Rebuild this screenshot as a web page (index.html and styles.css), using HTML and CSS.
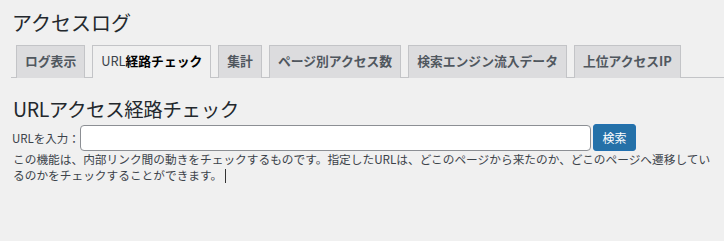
FILE: index.html
```html
<!DOCTYPE html>
<html lang="ja">
<head>
<meta charset="utf-8">
<title>アクセスログ</title>
<link rel="stylesheet" href="styles.css">
</head>
<body>
<div class="wrap">
  <h1 class="page-title">アクセスログ</h1>
  <nav class="nav-tabs">
    <a class="nav-tab">ログ表示</a>
    <a class="nav-tab active">URL<b>経路チェック</b></a>
    <a class="nav-tab">集計</a>
    <a class="nav-tab">ページ別アクセス数</a>
    <a class="nav-tab">検索エンジン流入データ</a>
    <a class="nav-tab">上位アクセスIP</a>
  </nav>
  <h2 class="section-title">URLアクセス経路チェック</h2>
  <form class="search-row">
    <label class="search-label" for="url">URLを入力：</label>
    <input class="search-input" id="url" type="text">
    <button class="search-btn" type="button">検索</button>
  </form>
  <p class="desc">この機能は、内部リンク間の動きをチェックするものです。指定したURLは、どこのページから来たのか、どこのページへ遷移しているのかをチェックすることができます。<span class="caret"></span></p>
</div>
</body>
</html>
```
FILE: styles.css
```css
html, body {
  margin: 0;
  padding: 0;
  background: #f0f0f0;
}
body {
  font-family: "Noto Sans CJK JP", "Noto Sans", sans-serif;
  color: #1d2327;
  width: 724px;
  height: 241px;
  overflow: hidden;
}
.wrap {
  padding: 0 8px 0 11px;
}
.page-title {
  margin: 0;
  padding-top: 9px;
  padding-left: 1px;
  font-size: 20px;
  font-weight: 400;
  line-height: 28px;
  color: #23282d;
}
.nav-tabs {
  display: flex;
  gap: 7px;
  margin-top: 8px;
  padding-left: 5px;
  border-bottom: 1px solid #c3c4c7;
  margin-right: -8px;
  height: 32px;
}
.nav-tab {
  box-sizing: border-box;
  height: 33px;
  padding: 0 8px;
  border: 1px solid #c3c4c7;
  border-bottom: none;
  background: #dcdcde;
  color: #50575e;
  font-size: 12.8px;
  font-weight: 700;
  line-height: 30px;
  white-space: nowrap;
}
.nav-tab.active {
  background: #f0f0f0;
  color: #3c434a;
  font-weight: 400;
}
.nav-tab.active b {
  color: #000;
  font-weight: 700;
}
.section-title {
  margin: 0;
  margin-top: 17px;
  padding-left: 2px;
  font-size: 19.5px;
  letter-spacing: -0.4px;
  font-weight: 400;
  line-height: 28px;
  color: #23282d;
}
.search-row {
  display: flex;
  align-items: center;
  margin: 1px 0 0 1px;
}
.search-label {
  font-size: 11.5px;
  color: #3c434a;
  width: 68px;
  white-space: nowrap;
}
.search-input {
  box-sizing: border-box;
  width: 511px;
  height: 26px;
  border: 1px solid #8c8f94;
  border-radius: 4px;
  background: #fff;
  margin: 0;
}
.search-btn {
  box-sizing: border-box;
  margin-left: 2px;
  width: 43px;
  height: 27px;
  border: 1px solid #2271b1;
  border-radius: 3px;
  background: #2571a8;
  color: #fff;
  font-family: inherit;
  font-size: 12px;
  padding: 0;
}
.desc {
  margin: 0 0 0 2px;
  font-size: 11.7px;
  line-height: 16px;
  color: #3c434a;
}
.caret {
  display: inline-block;
  width: 1px;
  height: 14px;
  background: #333;
  vertical-align: -3px;
  margin-left: 3px;
}
```
